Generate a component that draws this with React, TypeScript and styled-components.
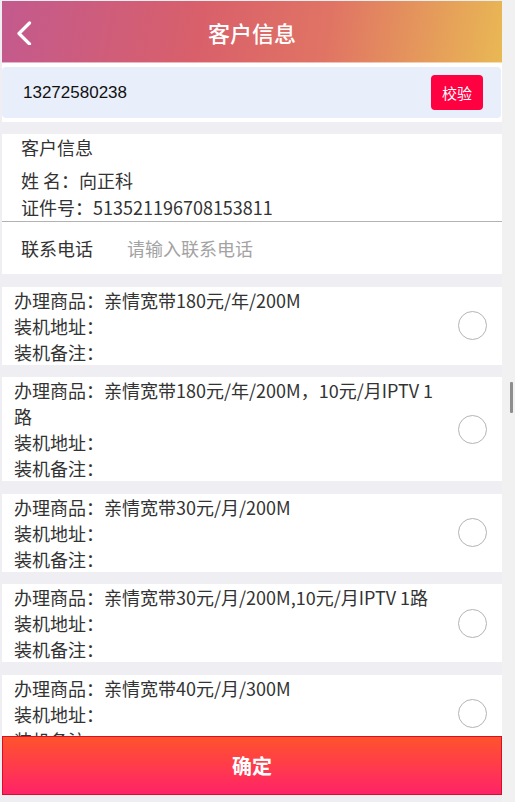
import React from "react";
import styled, { createGlobalStyle } from "styled-components";

const GlobalStyle = createGlobalStyle`
  html, body { margin: 0; padding: 0; }
  body {
    background: #efeff3;
    font-family: "Noto Sans CJK SC", "Noto Sans", sans-serif;
    color: #333;
    overflow: hidden;
  }
  * { box-sizing: border-box; }
`;

const Page = styled.div`
  margin: 0 13px 0 2px;
  padding-top: 1px;
  padding-bottom: 80px;
  display: flex;
  flex-direction: column;
`;

const Header = styled.header`
  height: 62px;
  display: flex;
  align-items: center;
  justify-content: center;
  position: relative;
  background: linear-gradient(100deg, #c35a8e 0%, #d9606a 40%, #e07464 65%, #e9b854 100%);
  border-bottom: 1px solid rgba(255, 255, 255, 0.55);
`;

const BackButton = styled.button`
  position: absolute;
  left: 9px;
  top: 18px;
  width: 26px;
  height: 28px;
  border: 0;
  padding: 0;
  background: transparent;
  display: flex;
  align-items: center;
  justify-content: center;
`;

const Title = styled.h1`
  margin: 0;
  font-size: 22px;
  font-weight: 500;
  color: #fff;
`;

const VerifyBar = styled.div`
  background: #fff;
  padding: 4px 1px 4px 0;
`;

const VerifyBox = styled.div`
  height: 51px;
  background: #e8eefa;
  border-radius: 4px;
  display: flex;
  align-items: center;
  justify-content: space-between;
  padding: 0 18px 0 21px;
`;

const PhoneValue = styled.span`
  font-family: "Liberation Sans", Arial, sans-serif;
  font-size: 17px;
  color: #111;
`;

const VerifyButton = styled.button`
  width: 52px;
  height: 35px;
  border: 0;
  border-radius: 4px;
  background: #ff0040;
  color: #fff;
  font-family: inherit;
  font-size: 15px;
  padding: 0;
`;

const Card = styled.section`
  background: #fff;
  margin-top: 12px;
`;

const CardTitle = styled.div`
  font-size: 18px;
  line-height: 26px;
  padding-left: 19px;
`;

const InfoBlock = styled.div`
  padding: 7px 0 1px 19px;
  font-size: 18px;
  line-height: 26.5px;
  border-bottom: 1px solid #b2b2b2;
`;

const ContactRow = styled.div`
  height: 52px;
  display: flex;
  align-items: center;
  padding-left: 19px;
  font-size: 18px;
`;

const ContactLabel = styled.span`
  width: 106px;
  color: #333;
`;

const ContactInput = styled.input`
  border: 0;
  outline: none;
  font-family: inherit;
  font-size: 18px;
  color: #333;
  padding: 0;
  width: 250px;
  background: transparent;
  &::placeholder { color: #a3a3a3; }
`;

const Item = styled.div`
  background: #fff;
  margin-top: 12.5px;
  display: flex;
  align-items: center;
  padding: 0 15px 0 12px;
`;

const ItemText = styled.div`
  flex: 0 0 430px;
  font-size: 18px;
  line-height: 26px;
`;

const Radio = styled.span`
  margin-left: auto;
  width: 29px;
  height: 29px;
  border-radius: 50%;
  border: 1px solid #b4b4b4;
  background: #fff;
`;

const ConfirmButton = styled.button`
  position: fixed;
  left: 2px;
  bottom: 7px;
  width: 500px;
  height: 59px;
  border: 1px solid #d80e24;
  background: linear-gradient(180deg, #ff532c 0%, #ff3c4a 50%, #ff2368 100%);
  color: #fff;
  font-family: inherit;
  font-size: 20px;
  font-weight: 700;
  padding: 0;
`;

const ScrollTrack = styled.div`
  position: fixed;
  top: 0;
  right: 0;
  width: 13px;
  height: 100%;
  background: #f1f1f1;
`;

const ScrollThumb = styled.div`
  position: absolute;
  left: 8px;
  top: 382px;
  width: 3px;
  height: 31px;
  background: #8e8e8e;
  border-radius: 1px;
`;

const products = [
  "亲情宽带180元/年/200M",
  "亲情宽带180元/年/200M，10元/月IPTV 1路",
  "亲情宽带30元/月/200M",
  "亲情宽带30元/月/200M,10元/月IPTV 1路",
  "亲情宽带40元/月/300M",
];

export default function App() {
  return (
    <>
      <GlobalStyle />
      <Page>
        <Header>
          <BackButton aria-label="返回">
            <svg width="16" height="24" viewBox="0 0 16 24">
              <path d="M13.5 2 L3 12.5 L13.5 23" fill="none" stroke="#fff" strokeWidth="3.2" strokeLinecap="round" strokeLinejoin="round" />
            </svg>
          </BackButton>
          <Title>客户信息</Title>
        </Header>
        <VerifyBar>
          <VerifyBox>
            <PhoneValue>13272580238</PhoneValue>
            <VerifyButton>校验</VerifyButton>
          </VerifyBox>
        </VerifyBar>
        <Card>
          <CardTitle>客户信息</CardTitle>
          <InfoBlock>
            <div>姓 名：向正科</div>
            <div>证件号：513521196708153811</div>
          </InfoBlock>
          <ContactRow>
            <ContactLabel>联系电话</ContactLabel>
            <ContactInput placeholder="请输入联系电话" />
          </ContactRow>
        </Card>
        {products.map((p) => (
          <Item key={p}>
            <ItemText>
              <div>办理商品：{p}</div>
              <div>装机地址：</div>
              <div>装机备注：</div>
            </ItemText>
            <Radio />
          </Item>
        ))}
      </Page>
      <ConfirmButton>确定</ConfirmButton>
      <ScrollTrack>
        <ScrollThumb />
      </ScrollTrack>
    </>
  );
}
